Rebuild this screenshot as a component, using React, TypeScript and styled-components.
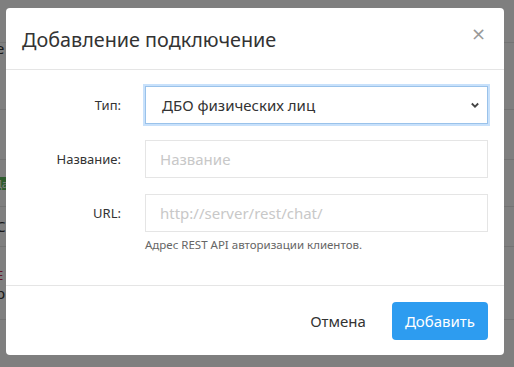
import React from "react";
import styled, { createGlobalStyle } from "styled-components";

const Global = createGlobalStyle`
  html, body { margin: 0; padding: 0; }
  body {
    width: 514px;
    height: 367px;
    overflow: hidden;
    font-family: "Noto Sans", "Open Sans", sans-serif;
    background: #fff;
  }
`;

const Page = styled.div`
  position: relative;
  width: 514px;
  height: 367px;
  overflow: hidden;
`;

const BgList = styled.div`
  display: flex;
  flex-direction: column;
`;

const BgRow = styled.div<{ $h: number; $line?: boolean }>`
  height: ${(p) => p.$h}px;
  border-bottom: 1px solid ${(p) => (p.$line ? "#e6e6e6" : "transparent")};
  display: flex;
  align-items: center;
  font-size: 15px;
  line-height: 1;
  color: #333;
  box-sizing: border-box;
`;

const BgText = styled.span<{ $color?: string; $size?: number }>`
  margin-left: -4px;
  font-size: ${(p) => p.$size || 15}px;
  color: ${(p) => p.$color || "#333"};
`;

const BgBadge = styled.span`
  margin-left: -10px;
  background: #5cb85c;
  color: #fff;
  font-size: 11px;
  padding: 1px 4px;
  border-radius: 2px;
`;

const Overlay = styled.div`
  position: absolute;
  inset: 0;
  background: rgba(0, 0, 0, 0.5);
  display: flex;
  align-items: flex-start;
  padding: 8px 10px 0 6px;
`;

const Modal = styled.div`
  width: 498px;
  background: #fff;
  border-radius: 4px;
  display: flex;
  flex-direction: column;
`;

const Header = styled.div`
  height: 62px;
  box-sizing: border-box;
  display: flex;
  align-items: center;
  justify-content: space-between;
  padding: 0 16px;
  border-bottom: 1px solid #e5e5e5;
`;

const Title = styled.h4`
  margin: 0;
  font-size: 19.8px;
  font-weight: 400;
  color: #333;
  padding-top: 2px;
`;

const Close = styled.button`
  border: none;
  background: none;
  padding: 0;
  margin-top: -10px;
  margin-right: 2px;
  font-size: 18px;
  line-height: 1;
  color: #999;
  font-weight: 400;
  cursor: pointer;
  font-family: "DejaVu Sans", sans-serif;
`;

const Body = styled.div`
  padding: 16px 16px 33px 16px;
  display: grid;
  grid-template-columns: 99px 1fr;
  column-gap: 24px;
  row-gap: 16px;
`;

const Label = styled.label`
  font-size: 13px;
  color: #333;
  text-align: right;
  line-height: 38px;
  height: 38px;
`;

const Field = styled.div`
  display: flex;
  flex-direction: column;
`;

const SelectBox = styled.div`
  height: 38px;
  box-sizing: border-box;
  border: 1px solid #9ac2ea;
  box-shadow: 0 0 0 2px #c8e1fb;
  display: flex;
  align-items: center;
  justify-content: space-between;
  padding: 0 7px 0 16px;
  font-size: 15px;
  color: #333;
`;

const Input = styled.input`
  height: 38px;
  box-sizing: border-box;
  border: 1px solid #e5e5e5;
  padding: 0 14px;
  font-size: 15px;
  font-family: inherit;
  color: #333;
  outline: none;
  &::placeholder { color: #c8c8c8; }
`;

const Help = styled.div`
  font-size: 11.5px;
  color: #666;
  margin-top: 5px;
`;

const Footer = styled.div`
  border-top: 1px solid #e5e5e5;
  display: flex;
  justify-content: flex-end;
  align-items: center;
  gap: 10px;
  padding: 16px 16px 15px 16px;
`;

const Button = styled.button<{ $primary?: boolean }>`
  height: 38px;
  padding: 0 ${(p) => (p.$primary ? 13 : 16)}px;
  font-size: 15px;
  font-family: inherit;
  border: none;
  border-radius: 4px;
  background: ${(p) => (p.$primary ? "#2d9cf0" : "transparent")};
  color: ${(p) => (p.$primary ? "#fff" : "#333")};
  cursor: pointer;
`;

const Chevron = () => (
  <svg width="10" height="10" viewBox="0 0 10 10">
    <path d="M1.8 3.5 L5 6.7 L8.2 3.5" fill="none" stroke="#444" strokeWidth="1.8" />
  </svg>
);

export default function App() {
  return (
    <Page>
      <Global />
      <BgList>
        <BgRow $h={43} $line />
        <BgRow $h={12}>
          <BgText>е</BgText>
        </BgRow>
        <BgRow $h={55} $line />
        <BgRow $h={50} $line />
        <BgRow $h={12} />
        <BgRow $h={24}>
          <BgBadge>Да</BgBadge>
        </BgRow>
        <BgRow $h={11} $line />
        <BgRow $h={40} $line>
          <BgText>С</BgText>
        </BgRow>
        <BgRow $h={22} />
        <BgRow $h={14}>
          <BgText $color="#c7254e" $size={13}>Е</BgText>
        </BgRow>
        <BgRow $h={22}>
          <BgText>р</BgText>
        </BgRow>
        <BgRow $h={15} $line />
      </BgList>
      <Overlay>
        <Modal>
          <Header>
            <Title>Добавление подключение</Title>
            <Close aria-label="Закрыть">×</Close>
          </Header>
          <Body>
            <Label>Тип:</Label>
            <SelectBox>
              <span>ДБО физических лиц</span>
              <Chevron />
            </SelectBox>
            <Label>Название:</Label>
            <Input placeholder="Название" />
            <Label>URL:</Label>
            <Field>
              <Input placeholder="http://server/rest/chat/" />
              <Help>Адрес REST API авторизации клиентов.</Help>
            </Field>
          </Body>
          <Footer>
            <Button>Отмена</Button>
            <Button $primary>Добавить</Button>
          </Footer>
        </Modal>
      </Overlay>
    </Page>
  );
}
